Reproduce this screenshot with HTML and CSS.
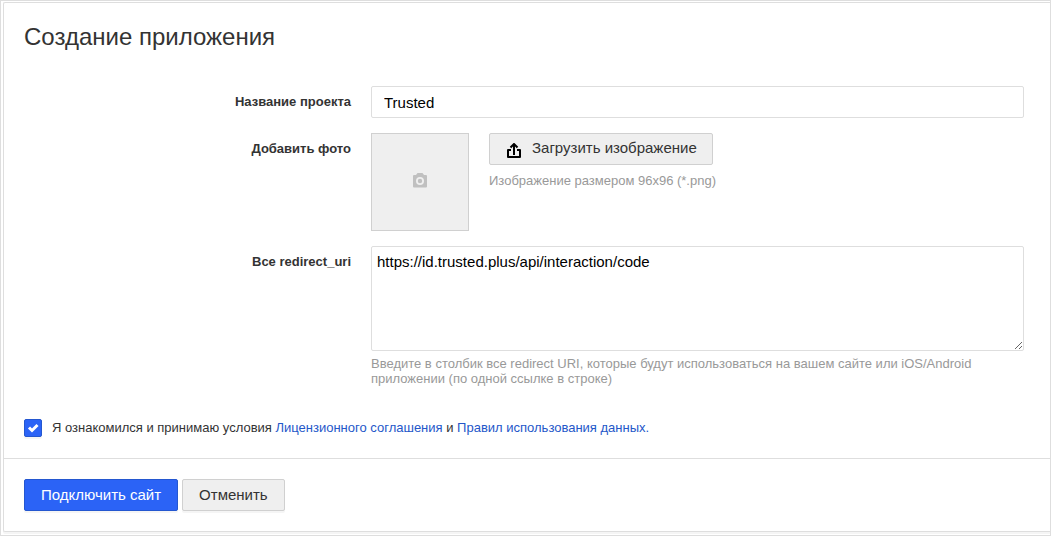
FILE: index.html
```html
<!DOCTYPE html>
<html lang="ru">

<head>
	<title>Создание приложения</title>
	<meta charset="utf-8">
	<meta name="viewport" content="width=device-width, initial-scale=1.0">
	<link rel="stylesheet" href="styles.css">
</head>

<body>
	<div class="frame">
		<form class="panel">
			<div class="content">
				<h1>Создание приложения</h1>

				<div class="row">
					<label class="label" for="name">Название проекта</label>
					<input class="input" type="text" id="name" value="Trusted">
				</div>

				<div class="row">
					<label class="label" for="upload">Добавить фото</label>
					<div class="photo">
						<div class="preview">
							<svg width="14" height="15" viewBox="0 0 14 15">
								<path fill="#c0c0c0" fill-rule="evenodd" d="M4.500 0h5L11 2h2a1 1 0 0 1 1 1v10.500a1 1 0 0 1-1 1H1a1 1 0 0 1-1-1V3a1 1 0 0 1 1-1h2zM7 4a4 4 0 1 0 0 8 4 4 0 0 0 0-8zM7 5.800a2.200 2.200 0 1 1 0 4.400 2.200 2.200 0 0 1 0-4.400z"/>
							</svg>
						</div>
						<div class="upload">
							<button class="button button-upload" type="button" id="upload">
								<svg width="14" height="16" viewBox="0 0 14 16">
									<path fill="none" stroke="#000" stroke-width="2" stroke-linejoin="round" d="M4 7H1v7h12V7h-3M7 12V2"/>
									<path fill="none" stroke="#000" stroke-width="2" d="M3.500 4.500L7 1l3.500 3.500"/>
								</svg>
								<span>Загрузить изображение</span>
							</button>
							<p class="hint">Изображение размером 96x96 (*.png)</p>
						</div>
					</div>
				</div>

				<div class="row">
					<label class="label" for="uris">Все redirect_uri</label>
					<div>
						<textarea class="textarea" id="uris">https://id.trusted.plus/api/interaction/code</textarea>
						<p class="hint">Введите в столбик все redirect URI, которые будут использоваться на вашем сайте или iOS/Android приложении (по одной ссылке в строке)</p>
					</div>
				</div>

				<div class="agree">
					<input class="checkbox" type="checkbox" id="agree" checked>
					<svg class="tick" width="18" height="18" viewBox="0 0 18 18">
						<path fill="none" stroke="#fff" stroke-width="3" d="M5 8.500l3 3 5.500-5.500"/>
					</svg>
					<label for="agree">Я ознакомился и принимаю условия <a href="#">Лицензионного соглашения</a> и <a href="#">Правил использования данных.</a></label>
				</div>
			</div>

			<div class="footer">
				<button class="button button-primary" type="submit">Подключить сайт</button>
				<button class="button" type="button">Отменить</button>
			</div>
		</form>
	</div>
</body>
</html>
```
FILE: styles.css
```css
*, *:before, *:after {
	box-sizing: border-box;
}

body {
	margin: 0;
	color: #333;
	background: #fff;
	font: 13px/15px "Liberation Sans", Arial, sans-serif;
}

h1 {
	margin: 0 0 35px;
	font-size: 24px;
	line-height: 28px;
	font-weight: normal;
}

a {
	color: #2457c9;
	text-decoration: none;
}

.frame {
	padding: 1px 0 3px 2px;
	border: 1px solid #dedede;
}

.panel {
	border: 1px solid #dedede;
	border-right: 0;
	border-radius: 2px 0 0 2px;
	box-shadow: 0 2px 0 #f5f5f5;
}

.content {
	padding: 20px 26px 21px 20px;
}

.row {
	display: grid;
	grid-template-columns: 327px 1fr;
	column-gap: 20px;
	margin-bottom: 15px;
}

.label {
	padding-top: 8px;
	text-align: right;
	font-weight: bold;
}

.input, .textarea {
	display: block;
	width: 100%;
	border: 1px solid #dedede;
	border-radius: 2px;
	color: #000;
	background: #fff;
	font: 15px/18px "Liberation Sans", Arial, sans-serif;
}

.input {
	height: 32px;
	padding: 1px 12px 0;
}

.textarea {
	height: 105px;
	padding: 6px 5px;
	resize: vertical;
}

.photo {
	display: flex;
	gap: 20px;
}

.preview {
	display: flex;
	align-items: center;
	justify-content: center;
	width: 98px;
	height: 98px;
	padding-bottom: 3px;
	border: 1px solid #d0d0d0;
	background: #efefef;
}

.hint {
	margin: 5px 0 0;
	color: #999;
}

.upload .hint {
	margin-top: 8px;
}

.button {
	height: 32px;
	padding: 0 16px;
	border: 1px solid #d0d0d0;
	border-radius: 2px;
	color: #333;
	background: #efefef;
	box-shadow: 0 2px 0 #f5f5f5;
	font: 15px/18px "Liberation Sans", Arial, sans-serif;
}

.button-upload {
	display: flex;
	align-items: flex-start;
	gap: 11px;
	padding: 5px 15px 0 17px;
	box-shadow: none;
}

.button-upload svg {
	margin-top: 4px;
}

.button-primary {
	border-color: #2457d0;
	color: #fff;
	background: #2b63f6;
}

.agree {
	display: grid;
	grid-template-columns: 18px 1fr;
	column-gap: 10px;
	margin-top: 33px;
}

.agree label {
	padding-top: 1px;
}

.checkbox, .tick {
	grid-area: 1 / 1;
}

.checkbox {
	appearance: none;
	width: 18px;
	height: 18px;
	margin: 0;
	border: 1px solid #2457d0;
	border-radius: 2px;
	box-shadow: 0 2px 0 #f5f5f5;
}

.checkbox:checked {
	background: #2b63f6;
}

.tick {
	z-index: 1;
	pointer-events: none;
}

.checkbox:not(:checked) + .tick {
	visibility: hidden;
}

.footer {
	display: flex;
	gap: 4px;
	padding: 20px;
	border-top: 1px solid #dedede;
}
```
